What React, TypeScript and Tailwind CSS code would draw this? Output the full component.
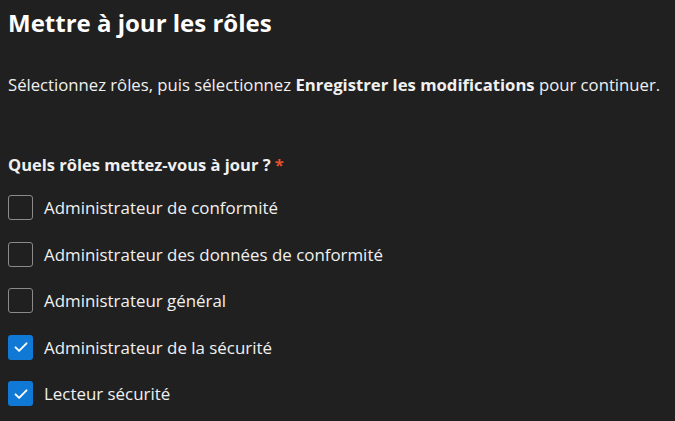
import { useState } from 'react';

const roles = [
    { id: 'compliance', label: 'Administrateur de conformité', checked: false },
    { id: 'compliance-data', label: 'Administrateur des données de conformité', checked: false },
    { id: 'global', label: 'Administrateur général', checked: false },
    { id: 'security', label: 'Administrateur de la sécurité', checked: true },
    { id: 'security-reader', label: 'Lecteur sécurité', checked: true },
];

export default function App() {
    const [selected, setSelected] = useState<Record<string, boolean>>(
        Object.fromEntries(roles.map(r => [r.id, r.checked]))
    );

    const toggle = (id: string) => setSelected({ ...selected, [id]: !selected[id] });

    return (
        <div className="w-[675px] h-[421px] bg-[#202020] text-[#f0f0f0] font-['Open_Sans',sans-serif] px-2 overflow-hidden">
            <h1 className="text-[24px] font-bold leading-[30px] pt-[8px] text-white">Mettre à jour les rôles</h1>

            <p className="text-[16.7px] leading-[22px] mt-[36px] whitespace-nowrap">
                Sélectionnez rôles, puis sélectionnez <span className="font-bold">Enregistrer les modifications</span> pour continuer.
            </p>

            <div className="mt-[58px]">
                <p className="text-[16.5px] font-bold leading-[22px]">
                    Quels rôles mettez-vous à jour ? <span className="text-[#e5502e]">*</span>
                </p>

                <div className="flex flex-col gap-[21.5px] mt-[19px]">
                    {roles.map((r) => (
                        <label key={r.id} className="flex items-center gap-[11px] cursor-pointer" onClick={() => toggle(r.id)}>
                            {selected[r.id] ? (
                                <span className="w-[25px] h-[25px] rounded-[3px] bg-[#1079d6] flex items-center justify-center">
                                    <svg width="16" height="16" viewBox="0 0 16 16" fill="none">
                                        <path d="M2.5 8.3l3.6 3.6 7.4-7.6" stroke="white" strokeWidth="1.9" strokeLinecap="round" strokeLinejoin="round" />
                                    </svg>
                                </span>
                            ) : (
                                <span className="w-[25px] h-[25px] rounded-[3px] border-[1.5px] border-[#8a8a8a]" />
                            )}
                            <span className="text-[16.9px] leading-[25px]">{r.label}</span>
                        </label>
                    ))}
                </div>
            </div>
        </div>
    );
}
